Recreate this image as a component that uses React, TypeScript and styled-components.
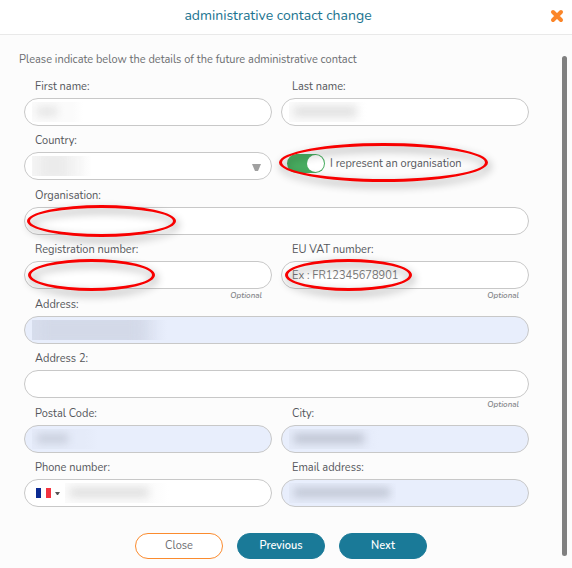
import React, { useState } from "react";
import styled, { createGlobalStyle, css } from "styled-components";

const GlobalStyle = createGlobalStyle`
  * { box-sizing: border-box; }
  html, body { margin: 0; background: #fcfcfc; }
  body, button, input, select {
    font-family: Nunito, "Noto Sans", sans-serif;
    font-size: 11px;
    color: #54565b;
  }
`;

const Dialog = styled.main`
  display: flex;
  flex-direction: column;
  min-height: 100vh;
`;

const Header = styled.header`
  display: flex;
  align-items: center;
  height: 35px;
  padding-left: 14px;
  padding-bottom: 3px;
  background: #fff;
  border-bottom: 1px solid #e9e9e9;
`;

const Title = styled.h1`
  flex: 1;
  margin: 0;
  text-align: center;
  font-size: 14px;
  line-height: 20px;
  font-weight: 400;
  color: #20738f;
`;

const CloseIcon = styled.button`
  display: grid;
  place-items: center;
  width: 30px;
  height: 30px;
  padding: 0;
  border: 0;
  background: none;
`;

const Body = styled.div`
  display: flex;
  flex: 1;
`;

const Content = styled.form`
  flex: 1;
  min-width: 0;
`;

const ScrollThumb = styled.div`
  width: 5px;
  margin: 21px 5px 12px 0;
  border-radius: 3px;
  background: #808080;
`;

const Intro = styled.p`
  margin: 0;
  padding: 17px 19px 11px;
  line-height: 16px;
  color: #6b6d70;
`;

const Fields = styled.div`
  display: grid;
  grid-template-columns: 1fr 1fr;
  column-gap: 9px;
  padding: 0 33px 0 24px;
`;

const Field = styled.div<{ $wide?: boolean }>`
  min-width: 0;
  ${(p) => p.$wide && css`grid-column: 1 / -1;`}
`;

const Label = styled.label`
  display: block;
  padding: 0 11px;
  margin-bottom: 3px;
  line-height: 16px;
`;

const Control = styled.div<{ $filled?: boolean }>`
  position: relative;
  display: flex;
  align-items: center;
  height: 28px;
  border: 1px solid #c8c8c8;
  border-radius: 14px;
  background: ${(p) => (p.$filled ? "#e8eefc" : "#fff")};
`;

const inputStyle = css`
  flex: 1;
  min-width: 0;
  height: 100%;
  padding: 0 10px;
  border: 0;
  border-radius: 14px;
  outline: 0;
  background: none;
`;

const TextInput = styled.input`
  ${inputStyle}
  &::placeholder { color: #797979; opacity: 1; }
`;

const Select = styled.select`
  ${inputStyle}
  appearance: none;
`;

const SelectArrow = styled.svg`
  position: absolute;
  right: 10px;
  top: 11px;
  pointer-events: none;
`;

const Note = styled.div<{ $tall?: boolean }>`
  height: ${(p) => (p.$tall ? 8 : 7)}px;
  padding-right: 10px;
  text-align: right;
  font-size: 8px;
  font-style: italic;
  font-weight: 600;
  line-height: 13px;
  color: #85878a;
`;

const Redaction = styled.span<{ $start: number; $width: number; $base: string }>`
  position: absolute;
  left: ${(p) => p.$start}px;
  top: 3px;
  width: ${(p) => p.$width}px;
  height: 20px;
  overflow: hidden;
  pointer-events: none;
  background: linear-gradient(90deg, ${(p) => p.$base} 80%, transparent);
`;

const Smear = styled.span<{ $width: number; $tone: string; $tall?: boolean }>`
  position: absolute;
  left: 5px;
  top: ${(p) => (p.$tall ? -8 : 5)}px;
  width: ${(p) => p.$width}px;
  height: ${(p) => (p.$tall ? 36 : 9)}px;
  background: ${(p) => p.$tone};
  filter: blur(${(p) => (p.$tall ? 7 : 4)}px);
`;

const DialCode = styled.button`
  display: flex;
  align-items: center;
  gap: 4px;
  height: 100%;
  padding: 0 0 0 11px;
  border: 0;
  background: none;
`;

const ToggleRow = styled.div`
  position: relative;
  display: flex;
  align-items: center;
  height: 38px;
  margin-top: 11px;
  padding-left: 6px;
`;

const ToggleLabel = styled.label`
  display: flex;
  align-items: center;
  gap: 5px;
`;

const Switch = styled.input`
  appearance: none;
  display: flex;
  justify-content: flex-end;
  width: 38px;
  height: 19px;
  margin: 0;
  padding: 1px;
  border-radius: 10px;
  background: #bbb;
  &:checked { background: #48ad60; }
  &:not(:checked) { justify-content: flex-start; }
  &::before {
    content: "";
    width: 17px;
    height: 17px;
    border-radius: 50%;
    background: #fff;
  }
`;

const Highlight = styled.span<{ $x: number; $y: number; $width: number; $height: number }>`
  position: absolute;
  z-index: 1;
  left: ${(p) => p.$x}px;
  top: ${(p) => p.$y}px;
  width: ${(p) => p.$width}px;
  height: ${(p) => p.$height}px;
  border: 3px solid #f80000;
  border-radius: 50%;
  pointer-events: none;
  filter: drop-shadow(2px 4px 4px rgba(0, 0, 0, 0.45));
`;

const Actions = styled.div`
  display: flex;
  justify-content: center;
  gap: 14px;
  padding: 19px 0 9px;
`;

const Action = styled.button<{ $outline?: boolean }>`
  width: 88px;
  height: 26px;
  padding: 0 0 2px;
  border: 1px solid ${(p) => (p.$outline ? "#fb8b2e" : "#1a7a98")};
  border-radius: 13px;
  background: ${(p) => (p.$outline ? "#fff" : "#1a7a98")};
  color: ${(p) => (p.$outline ? "#6b6d70" : "#fff")};
  font-weight: ${(p) => (p.$outline ? 400 : 600)};
`;

type Blur = { start?: number; width: number; smear: number; tone: string; base?: string; tall?: boolean };

function Redacted({ start = 7, width, smear, tone, base = "#fbfbfb", tall }: Blur) {
  return (
    <Redaction $start={start} $width={width} $base={base}>
      <Smear $width={smear} $tone={tone} $tall={tall} />
    </Redaction>
  );
}

type TextFieldProps = {
  id: string;
  label: string;
  wide?: boolean;
  filled?: boolean;
  note?: string;
  tall?: boolean;
  placeholder?: string;
  type?: string;
  blur?: Blur;
  ring?: { x: number; width: number };
};

function TextField({ id, label, wide, filled, note, tall, placeholder, type = "text", blur, ring }: TextFieldProps) {
  return (
    <Field $wide={wide}>
      <Label htmlFor={id}>{label}</Label>
      <Control $filled={filled}>
        <TextInput id={id} type={type} placeholder={placeholder} />
        {blur && <Redacted {...blur} />}
        {ring && <Highlight $x={ring.x} $y={-3} $width={ring.width} $height={32} />}
      </Control>
      <Note $tall={tall}>{note}</Note>
    </Field>
  );
}

export default function App() {
  const [organisation, setOrganisation] = useState(true);
  return (
    <>
      <GlobalStyle />
      <Dialog>
        <Header>
          <Title>administrative contact change</Title>
          <CloseIcon type="button" aria-label="Close dialog">
            <svg width="14" height="14" viewBox="0 0 14 14" stroke="#fb8528" strokeWidth="4" strokeLinecap="round">
              <path d="M3 3l8 8M11 3l-8 8" />
            </svg>
          </CloseIcon>
        </Header>
        <Body>
          <Content onSubmit={(e) => e.preventDefault()}>
            <Intro>Please indicate below the details of the future administrative contact</Intro>
            <Fields>
              <TextField id="first" label="First name:" blur={{ width: 51, smear: 20, tone: "#e4e4e4" }} />
              <TextField id="last" label="Last name:" blur={{ width: 78, smear: 62, tone: "#dedede" }} />
              <Field>
                <Label htmlFor="country">Country:</Label>
                <Control>
                  <Select id="country" />
                  <Redacted width={60} smear={34} tone="#ebebeb" base="#f8f8f8" tall />
                  <SelectArrow width="9" height="7" viewBox="0 0 9 7">
                    <path d="M0 0h9L6 7H3z" fill="#a0a0a0" />
                  </SelectArrow>
                </Control>
                <Note $tall />
              </Field>
              <Field>
                <ToggleRow>
                  <ToggleLabel>
                    <Switch
                      type="checkbox"
                      role="switch"
                      checked={organisation}
                      onChange={(e) => setOrganisation(e.target.checked)}
                    />
                    I represent an organisation
                  </ToggleLabel>
                  <Highlight $x={-2} $y={-1} $width={209} $height={39} />
                </ToggleRow>
              </Field>
              <TextField id="organisation" label="Organisation:" wide ring={{ x: 2, width: 149 }} />
              <TextField id="registration" label="Registration number:" note="Optional" tall ring={{ x: 3, width: 127 }} />
              <TextField
                id="vat"
                label="EU VAT number:"
                note="Optional"
                tall
                placeholder="Ex : FR12345678901"
                ring={{ x: 3, width: 127 }}
              />
              <TextField
                id="address"
                label="Address:"
                wide
                filled
                blur={{ width: 135, smear: 106, tone: "#d3d9e8", base: "#d9dfee", tall: true }}
              />
              <TextField id="address2" label="Address 2:" wide note="Optional" tall />
              <TextField
                id="postal"
                label="Postal Code:"
                filled
                blur={{ width: 66, smear: 31, tone: "#c7cddb", base: "#e5ebf9" }}
              />
              <TextField
                id="city"
                label="City:"
                filled
                blur={{ width: 90, smear: 70, tone: "#bcc2d0", base: "#e5ebf9" }}
              />
              <Field>
                <Label htmlFor="phone">Phone number:</Label>
                <Control>
                  <DialCode type="button" aria-label="Country code: France">
                    <svg width="15" height="10" viewBox="0 0 15 10">
                      <path d="M0 0h5v10H0z" fill="#0b2a92" />
                      <path d="M5 0h5v10H5z" fill="#fff" />
                      <path d="M10 0h5v10h-5z" fill="#f3333f" />
                    </svg>
                    <svg width="5" height="3" viewBox="0 0 5 3">
                      <path d="M0 0h5L3 3H2z" fill="#555" />
                    </svg>
                  </DialCode>
                  <TextInput id="phone" type="tel" />
                  <Redacted start={40} width={104} smear={78} tone="#dedede" />
                </Control>
                <Note />
              </Field>
              <TextField
                id="email"
                label="Email address:"
                type="email"
                filled
                blur={{ width: 107, smear: 96, tone: "#bfc5d3", base: "#e5ebf9" }}
              />
            </Fields>
            <Actions>
              <Action type="button" $outline>Close</Action>
              <Action type="button">Previous</Action>
              <Action type="submit">Next</Action>
            </Actions>
          </Content>
          <ScrollThumb />
        </Body>
      </Dialog>
    </>
  );
}
